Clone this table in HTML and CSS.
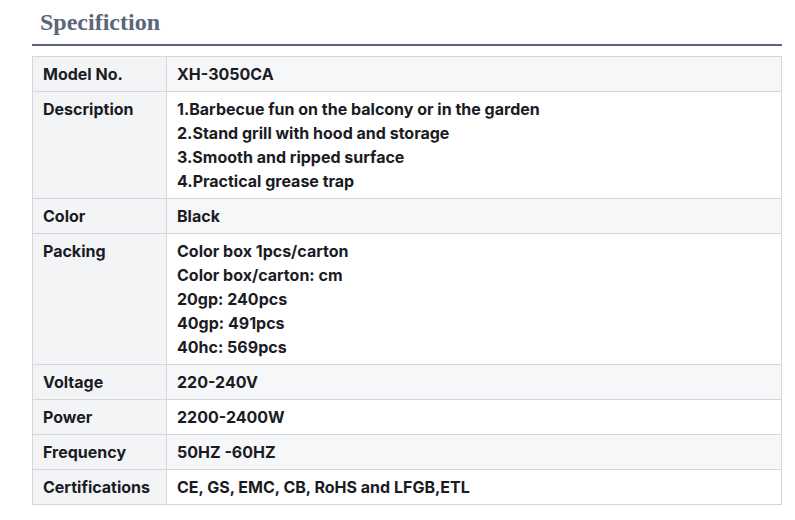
FILE: index.html
```html
<!DOCTYPE html>
<html>
<head>
<meta charset="utf-8">
<link rel="stylesheet" href="styles.css">
</head>
<body>
<div class="wrap">
  <h2 class="title">Specifiction</h2>
  <table class="spec">
    <tr class="alt"><th>Model No.</th><td>XH-3050CA</td></tr>
    <tr><th>Description</th><td>1.Barbecue fun on the balcony or in the garden<br>2.Stand grill with hood and storage<br>3.Smooth and ripped surface<br>4.Practical grease trap</td></tr>
    <tr class="alt"><th>Color</th><td>Black</td></tr>
    <tr><th>Packing</th><td>Color box 1pcs/carton<br>Color box/carton: cm<br>20gp: 240pcs<br>40gp: 491pcs<br>40hc: 569pcs</td></tr>
    <tr class="alt"><th>Voltage</th><td>220-240V</td></tr>
    <tr><th>Power</th><td>2200-2400W</td></tr>
    <tr class="alt"><th>Frequency</th><td>50HZ -60HZ</td></tr>
    <tr><th>Certifications</th><td>CE, GS, EMC, CB, RoHS and LFGB,ETL</td></tr>
  </table>
</div>
</body>
</html>
```
FILE: styles.css
```css
html, body { margin: 0; padding: 0; background: #fff; }
.wrap { padding: 0 13px 0 32px; }
.title {
  margin: 0;
  padding: 8px 0 0 8px;
  height: 46px;
  box-sizing: border-box;
  font-family: "Liberation Serif", serif;
  font-weight: bold;
  font-size: 24px;
  line-height: 28px;
  color: #5b6679;
  border-bottom: 2px solid #5b6474;
}
.spec {
  margin-top: 10px;
  width: 100%;
  border-collapse: collapse;
  font-family: Inter, sans-serif;
  font-weight: 700;
  font-size: 16px;
  line-height: 24px;
  color: #1b1b24;
}
.spec th, .spec td {
  border: 1px solid #d4d6d9;
  padding: 5px 10px;
  text-align: left;
  vertical-align: top;
  font-weight: 700;
}
.spec th { width: 113px; background: #f3f4f6; }
.spec td { background: #fff; }
.spec tr.alt td { background: #f6f7f8; }
```
